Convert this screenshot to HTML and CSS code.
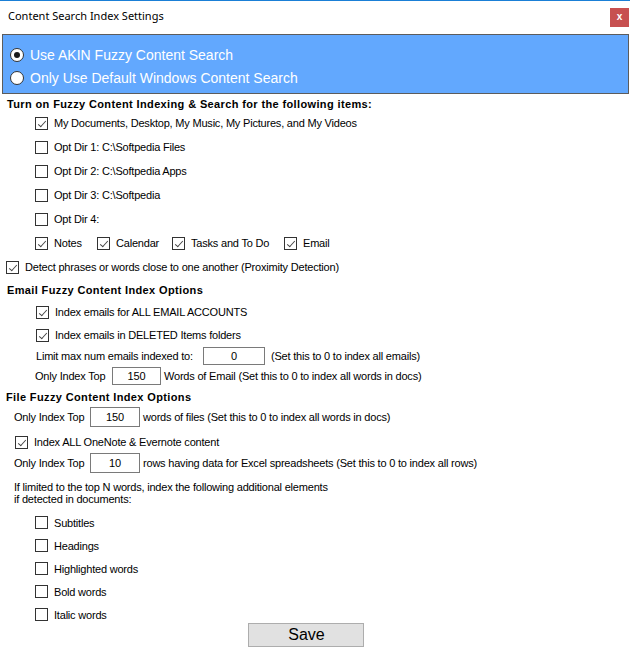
FILE: index.html
```html
<!DOCTYPE html>
<html>
<head>
<meta charset="utf-8">
<title>Content Search Index Settings</title>
<link rel="stylesheet" href="styles.css">
</head>
<body>
<div class="window">
  <div class="titlebar">
    <span class="title">Content Search Index Settings</span>
    <span class="close">x</span>
  </div>

  <div class="mode-box">
    <div class="radio-row"><span class="radio checked"></span><span>Use AKIN Fuzzy Content Search</span></div>
    <div class="radio-row"><span class="radio"></span><span>Only Use Default Windows Content Search</span></div>
  </div>

  <div class="heading h-first">Turn on Fuzzy Content Indexing &amp; Search for the following items:</div>
  <div class="row ind35"><span class="cb on"></span><span>My Documents, Desktop, My Music, My Pictures, and My Videos</span></div>
  <div class="row ind35"><span class="cb"></span><span>Opt Dir 1: C:\Softpedia Files</span></div>
  <div class="row ind35"><span class="cb"></span><span>Opt Dir 2: C:\Softpedia Apps</span></div>
  <div class="row ind35"><span class="cb"></span><span>Opt Dir 3: C:\Softpedia</span></div>
  <div class="row ind35"><span class="cb"></span><span>Opt Dir 4:</span></div>
  <div class="row ind35 items">
    <div class="item"><span class="cb on"></span><span>Notes</span></div>
    <div class="item"><span class="cb on"></span><span>Calendar</span></div>
    <div class="item"><span class="cb on"></span><span>Tasks and To Do</span></div>
    <div class="item"><span class="cb on"></span><span>Email</span></div>
  </div>
  <div class="row ind6"><span class="cb on"></span><span>Detect phrases or words close to one another (Proximity Detection)</span></div>

  <div class="heading h-sec">Email Fuzzy Content Index Options</div>
  <div class="row ind36"><span class="cb on"></span><span>Index emails for ALL EMAIL ACCOUNTS</span></div>
  <div class="row ind36 r22"><span class="cb on"></span><span>Index emails in DELETED Items folders</span></div>
  <div class="row ind36 r20"><span class="lbl w167">Limit max num emails indexed to:</span><span class="num w62">0</span><span class="after6">(Set this to 0 to index all emails)</span></div>
  <div class="row ind35 r20"><span class="lbl w77">Only Index Top</span><span class="num w49">150</span><span class="after3">Words of Email (Set this to 0 to index all words in docs)</span></div>

  <div class="heading h-file">File Fuzzy Content Index Options</div>
  <div class="row ind14 r20"><span class="lbl w76">Only Index Top</span><span class="num w50 tall">150</span><span class="after3">words of files (Set this to 0 to index all words in docs)</span></div>
  <div class="row ind15 r24 gap3"><span class="cb on"></span><span>Index ALL OneNote &amp; Evernote content</span></div>
  <div class="row ind14 r18"><span class="lbl w76">Only Index Top</span><span class="num w50 tall">10</span><span class="after3">rows having data for Excel spreadsheets (Set this to 0 to index all rows)</span></div>
  <p class="note">If limited to the top N words, index the following additional elements<br>if detected in documents:</p>

  <div class="extras">
    <div class="row ind35 r23"><span class="cb"></span><span>Subtitles</span></div>
    <div class="row ind35 r23"><span class="cb"></span><span>Headings</span></div>
    <div class="row ind35 r23"><span class="cb"></span><span>Highlighted words</span></div>
    <div class="row ind35 r23"><span class="cb"></span><span>Bold words</span></div>
    <div class="row ind35 r23"><span class="cb"></span><span>Italic words</span></div>
  </div>

  <div class="actions"><button class="save" type="button">Save</button></div>
</div>
</body>
</html>
```

FILE: styles.css
```css
html, body {
  margin: 0;
  padding: 0;
  background: #ffffff;
}

body {
  font-family: "Liberation Sans", Arial, sans-serif;
  font-size: 11px;
  letter-spacing: -0.2px;
  color: #000000;
}

.window {
  position: relative;
  width: 630px;
  height: 660px;
  box-sizing: border-box;
  border-top: 1px solid #1a7fd6;
  background: #ffffff;
  overflow: hidden;
}

.titlebar {
  display: flex;
  align-items: flex-start;
  height: 33px;
  padding-left: 8px;
}

.title {
  font-family: "Noto Sans", "Open Sans", sans-serif;
  font-size: 11px;
  letter-spacing: 0;
  line-height: 16px;
  padding-top: 7px;
  color: #000000;
}

.close {
  margin-left: auto;
  margin-right: 1px;
  margin-top: 7px;
  width: 19px;
  height: 19px;
  background: #c75050;
  color: #ffffff;
  font-weight: bold;
  font-size: 10px;
  letter-spacing: 0;
  line-height: 18px;
  text-align: center;
}

.mode-box {
  margin: 0 1px 0 2px;
  border: 1px solid #5c5c5c;
  background: #62a8fe;
  padding: 8px 0 4px 7px;
  color: #ffffff;
  font-size: 14px;
  letter-spacing: 0;
}

.radio-row {
  display: flex;
  align-items: center;
  height: 23px;
  gap: 6px;
}

.radio {
  width: 14px;
  height: 14px;
  box-sizing: border-box;
  border: 1px solid #333333;
  border-radius: 50%;
  background: #ffffff;
  display: flex;
  align-items: center;
  justify-content: center;
}

.radio.checked::after {
  content: "";
  width: 6px;
  height: 6px;
  border-radius: 50%;
  background: #1a1a1a;
}

.heading {
  font-weight: bold;
  letter-spacing: 0.37px;
  padding-left: 7px;
  line-height: 13px;
  box-sizing: border-box;
}

.h-first {
  height: 17px;
  padding-top: 4px;
}

.h-sec {
  height: 21px;
  padding-top: 5px;
}

.h-file {
  height: 21px;
  padding-top: 5px;
  padding-left: 6px;
}

.row {
  display: flex;
  align-items: center;
  height: 24px;
  white-space: nowrap;
}

.r18 { height: 18px; }
.r20 { height: 20px; }
.r22 { height: 22px; }
.r23 { height: 23px; }
.r24 { height: 24px; }
.gap3 { margin-top: 3px; }

.ind6 { padding-left: 6px; }
.ind14 { padding-left: 14px; }
.ind15 { padding-left: 15px; }
.ind35 { padding-left: 35px; }
.ind36 { padding-left: 36px; }

.cb {
  flex: none;
  width: 13px;
  height: 13px;
  box-sizing: border-box;
  border: 1px solid #333333;
  background: #ffffff;
  margin-right: 6px;
  position: relative;
}

.cb.on::after {
  content: "";
  position: absolute;
  left: 4px;
  top: 1px;
  width: 3px;
  height: 7px;
  border-right: 1px solid #444444;
  border-bottom: 1px solid #444444;
  transform: rotate(42deg);
  transform-origin: center;
}

.items {
  display: grid;
  grid-template-columns: 62px 75px 112px auto;
  align-items: center;
}

.item {
  display: flex;
  align-items: center;
}

.lbl {
  flex: none;
}

.w167 { width: 167px; }
.w77 { width: 77px; }
.w76 { width: 76px; }

.num {
  flex: none;
  box-sizing: border-box;
  height: 18px;
  border: 1px solid #7a7a7a;
  text-align: center;
  line-height: 16px;
  background: #ffffff;
}

.num.tall {
  height: 20px;
  line-height: 18px;
}

.w62 { width: 62px; }
.w49 { width: 49px; }
.w50 { width: 50px; }

.after6 { margin-left: 6px; }
.after3 { margin-left: 3px; }

.note {
  margin: 9px 0 0 14px;
  line-height: 12px;
}

.extras {
  margin-top: 6px;
}

.actions {
  margin-top: -3px;
  padding-left: 248px;
}

.save {
  width: 116px;
  height: 24px;
  box-sizing: border-box;
  border: 1px solid #adadad;
  background: #e1e1e1;
  font-family: "Liberation Sans", Arial, sans-serif;
  font-size: 16px;
  letter-spacing: 0;
  color: #000000;
  padding: 0 0 0 1px;
}
```
